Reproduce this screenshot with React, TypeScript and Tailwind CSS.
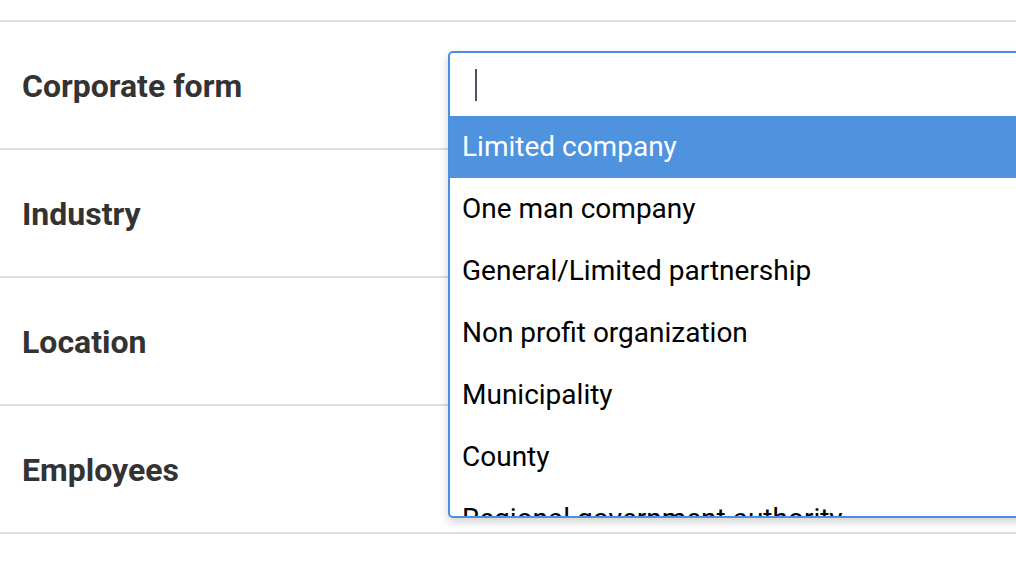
const fields = ['Corporate form', 'Industry', 'Location', 'Employees']

const options = [
  'Limited company',
  'One man company',
  'General/Limited partnership',
  'Non profit organization',
  'Municipality',
  'County',
  'Regional government authority',
]

export default function App() {
  return (
    <div
      className="relative h-[582px] w-[1016px] overflow-hidden bg-white"
      style={{ fontFamily: 'Roboto, "Liberation Sans", sans-serif' }}
    >
      <div className="pt-5">
        <div className="border-t-2 border-[#dddddd]">
          {fields.map((label) => (
            <div
              key={label}
              className="flex h-[128px] items-center border-b-2 border-[#dddddd] pl-[22px]"
            >
              <span className="pt-[2px] text-[32px] font-bold text-[#333333]">{label}</span>
            </div>
          ))}
        </div>
      </div>

      {/* Open select dropdown */}
      <div className="absolute left-[448px] top-[51px] flex h-[467px] w-[700px] flex-col overflow-hidden rounded-[5px] border-2 border-[#4a90e2] bg-white shadow-[0_4px_10px_rgba(0,0,0,0.18)]">
        <div className="flex h-[63px] shrink-0 items-center pl-[25px]">
          <span className="block h-[32px] w-[2px] bg-[#4a5460]" />
        </div>
        <ul className="flex-1 overflow-hidden">
          {options.map((opt, i) => (
            <li
              key={opt}
              className={
                i === 0
                  ? 'flex h-[62px] items-center bg-[#4f92de] pl-[12px] text-[28px] text-white'
                  : 'flex h-[62px] items-center pl-[12px] text-[28px] text-black'
              }
            >
              {opt}
            </li>
          ))}
        </ul>
      </div>
    </div>
  )
}
